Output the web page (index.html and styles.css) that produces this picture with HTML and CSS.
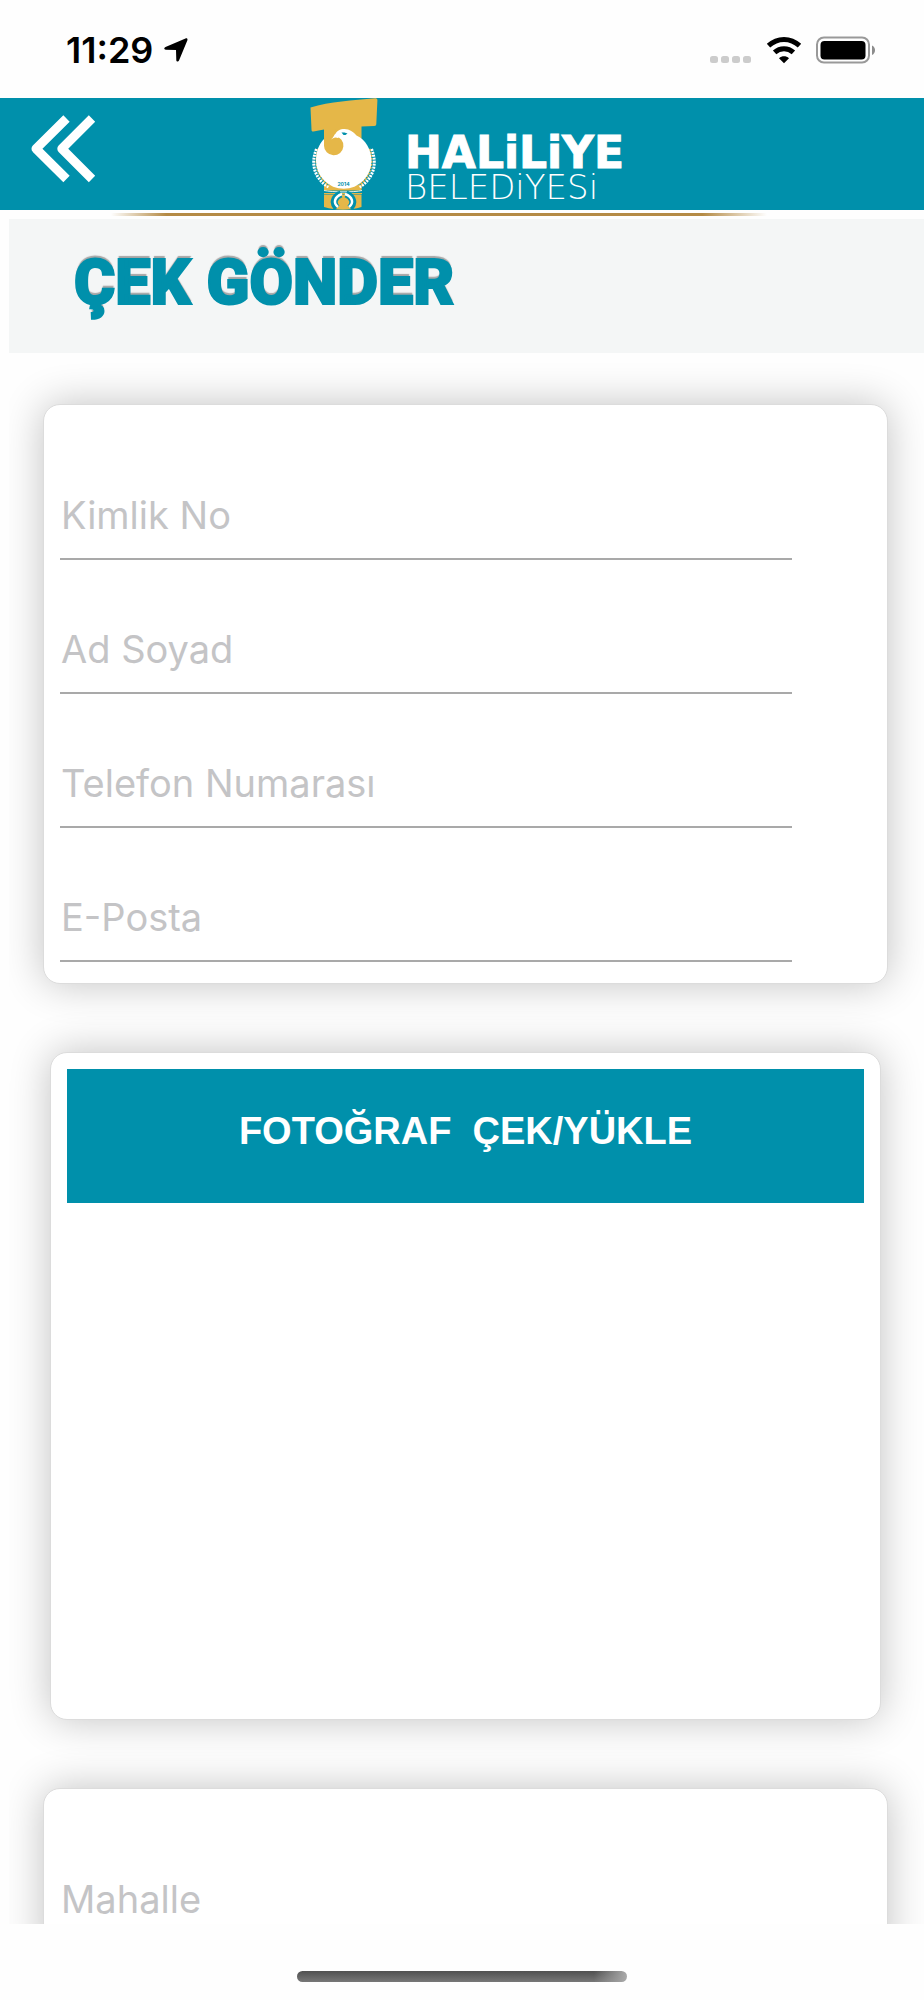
FILE: index.html
```html
<!DOCTYPE html>
<html lang="tr">
<head>
<meta charset="utf-8">
<meta name="viewport" content="width=device-width, initial-scale=1">
<title>Çek Gönder</title>
<link rel="stylesheet" href="styles.css">
</head>
<body>
<div class="status-bar">
  <div class="status-left">
    <span class="clock">11:29</span>
    <svg class="location" viewBox="0 0 24 24" width="24" height="24" aria-hidden="true"><path d="M1.500 9 21.500 .5c1.300-.5 2.300.4 1.900 1.700L15 22.500c-.6 1.500-2.600 1.300-2.700-.3L12 12 1.800 11.800C-.2 11.700-.2 9.700 1.500 9Z"/></svg>
  </div>
  <div class="status-right">
    <svg width="42" height="28" viewBox="0 0 42 28" aria-hidden="true"><g fill="#ccc"><rect y="20" width="8" height="7" rx="2.500"/><rect x="11" y="20" width="8" height="7" rx="2.500"/><rect x="22" y="20" width="8" height="7" rx="2.500"/><rect x="33" y="20" width="8" height="7" rx="2.500"/></g></svg>
    <svg width="36" height="28" viewBox="0 0 36 28" aria-hidden="true"><g fill="none" stroke="#000" stroke-width="5"><path d="M2.500 9.700C11.500 1.300 24.500 1.300 33.500 9.700"/><path d="M8.600 16.400C14 11.400 22 11.400 27.400 16.400"/></g><path d="M13 22.200c3-2.600 7-2.600 10 0L18 27.200Z"/></svg>
    <svg width="60" height="28" viewBox="0 0 60 28" aria-hidden="true"><rect x="1" y="1.500" width="52" height="25" rx="7" fill="none" stroke="#999" stroke-width="2"/><rect x="4.500" y="5" width="45" height="18.500" rx="4" fill="#000"/><path d="M56 9.500c4 1.500 4 8 0 9.500Z" fill="#8c8c8c"/></svg>
  </div>
</div>

<header class="app-header">
  <button class="back" type="button" aria-label="Geri">
    <svg width="66" height="68" viewBox="0 0 66 68" aria-hidden="true"><g fill="none" stroke="#fff" stroke-width="9" stroke-linejoin="round"><path d="M36.500 3.500 6 33.700 36.500 64"/><path d="M62 3.500 31.800 33.700 62 64"/></g></svg>
  </button>
  <div class="brand">
    <svg class="emblem" width="100" height="112" viewBox="0 0 100 112" aria-hidden="true">
      <path fill="#e5b748" d="M16.500 9.500C36 3.500 59 2.500 81 .3c1.500 0 2.500.7 2.400 2.200L82.300 26c-.1 1.300-.6 1.800-2 1.900L67.500 28.500V109c-12 3.500-25 3.500-37.500 0V31.500L19.500 33.500c-1.500.2-2-.5-2-2Z"/>
      <path fill="#0090ab" d="M26 72h46v15H26Z"/>
      <path fill="#e5b748" d="M30 87h37.500v4H30Z"/>
      <g fill="none" stroke-width="3" stroke-dasharray="2 1"><path stroke="#fff" d="M22.500 51c-7 17 0 31 12 38M77.500 51c7 17 0 31-12 38"/><path stroke="#e5b748" d="M25 51c-5 15 0 28 10 36M75 51c5 15 0 28-10 36"/></g>
      <path fill="#fff" d="M36 43.500c2.500-1.700 3.500-3.200 5-6.500 1.500-4.300 5-6 9.500-6 5 0 9 3 12 6.500 9 4 15 14 15 25.500A27.700 27.700 0 0 1 22 63c0-9.500 3-17 8-22Z"/>
      <path fill="#e5b748" d="M30 31h11.500c-1 4.500-2.500 8.500-5 11l4.500-4a9.700 9.700 0 1 1-11 9.700Z"/>
      <path fill="#fff" d="M35 43c3-2 4.500-4 6-7l6 1-3 3c-3-1.500-5 0-9 3Z"/>
      <path fill="#0090ab" d="M47.500 34.500h3l3 1-2 1.500h-2Z"/>
      <text x="49.500" y="87.500" text-anchor="middle" class="emblem-year">2014</text>
      <path fill="none" stroke="#0090ab" stroke-width="4" d="M29 94.500h39"/>
      <path fill="none" stroke="#e8f2e8" d="M30 92.500c8 1.700 30 2 38 0"/>
      <path fill="none" stroke="#e5b748" d="M30 95.500h38"/>
      <path fill="none" stroke="#0090ab" stroke-width="7" d="M47 96c-7 3-9 9-4 14M52 96c7 3 9 9 4 14"/>
      <path fill="none" stroke="#fff" stroke-width="2.500" d="M48 96c-8 3-9 9-4 13M51 96c8 3 9 9 4 13"/>
    </svg>
    <div class="wordmark"><span class="wordmark-name">HALiLiYE</span><span class="wordmark-type">BELEDiYESi</span></div>
  </div>
</header>
<div class="gold-line"></div>

<main class="content">
  <div class="title-panel"><h1>ÇEK GÖNDER</h1></div>
  <form class="cards">
    <section class="card">
      <input class="field" type="text" placeholder="Kimlik No" aria-label="Kimlik No">
      <input class="field" type="text" placeholder="Ad Soyad" aria-label="Ad Soyad">
      <input class="field" type="tel" placeholder="Telefon Numarası" aria-label="Telefon Numarası">
      <input class="field" type="email" placeholder="E-Posta" aria-label="E-Posta">
    </section>
    <section class="card photo-card">
      <button class="upload" type="button">FOTOĞRAF&nbsp; ÇEK/YÜKLE</button>
      <div class="preview"></div>
    </section>
    <section class="card">
      <input class="field" type="text" placeholder="Mahalle" aria-label="Mahalle">
    </section>
  </form>
</main>
<footer class="home-area"><div class="home-indicator"></div></footer>
</body>
</html>
```
FILE: styles.css
```css
* { box-sizing: border-box; }

body {
  margin: 0;
  height: 100vh;
  display: flex;
  flex-direction: column;
  background: #fefefe;
  font-family: Inter, "Liberation Sans", sans-serif;
}

.status-bar {
  flex: none;
  height: 98px;
  padding: 2px 48px 0 66px;
  display: flex;
  align-items: center;
  justify-content: space-between;
}
.status-left { display: flex; align-items: center; gap: 11px; }
.clock { font-size: 36px; font-weight: 600; line-height: 40px; }
.status-right { display: flex; align-items: center; gap: 14px; }

.app-header {
  flex: none;
  height: 112px;
  display: grid;
  grid-template-columns: 1fr auto 1fr;
  align-items: center;
  background: #0090ab;
}
.back {
  justify-self: start;
  margin: 0 0 10px 30px;
  padding: 0;
  border: 0;
  background: none;
  line-height: 0;
}
.brand { display: flex; height: 112px; }
.wordmark {
  width: 236px;
  padding: 39px 0 0 11px;
  display: flex;
  flex-direction: column;
  gap: 4px;
  color: #fff;
  white-space: nowrap;
}
.wordmark-name {
  font: 700 44px/32px "DejaVu Sans", sans-serif;
  -webkit-text-stroke: 1px #fff;
}
.wordmark-type { font: 200 34px/28px "DejaVu Sans", "DejaVu Sans Light", sans-serif; }
.emblem-year { font: 700 5px Inter, sans-serif; fill: #0090ab; }

.gold-line {
  flex: none;
  height: 3px;
  margin: 3px 0;
  background: linear-gradient(90deg, transparent 12%, #b48a45 18%, #b48a45 76%, transparent 83%);
}

.content {
  flex: 1;
  min-height: 0;
  margin-left: 9px;
  overflow: auto;
  scrollbar-width: none;
}
.title-panel {
  height: 134px;
  padding: 24px 65px;
  background: #f4f6f6;
}
h1 {
  margin: 0;
  color: #0090ab;
  font: 900 63px/80px Roboto, sans-serif;
  -webkit-text-stroke: 2px #0090ab;
  text-shadow: 0 -3px 1px #a5a5a5;
}

.cards {
  padding: 51px 36px 68px 34px;
  display: flex;
  flex-direction: column;
  gap: 68px;
}
.card {
  padding: 21px 95px 21px 16px;
  border: 1px solid #dcdcdc;
  border-radius: 17px;
  background: #fff;
  box-shadow: 0 0 40px rgba(0, 0, 0, .24);
}
.field {
  display: block;
  width: 100%;
  height: 134px;
  padding: 45px 1px 0;
  border: 0;
  border-bottom: 2px solid #a9a9a9;
  border-radius: 0;
  outline: 0;
  background: none;
  color: #222;
  font: 400 38px/48px Inter, sans-serif;
}
.field::placeholder { color: #c4c4c6; opacity: 1; }

.photo-card { margin: 0 7px; padding: 16px; }
.upload {
  display: block;
  width: 100%;
  height: 134px;
  padding: 0 0 10px;
  border: 0;
  background: #0090ab;
  color: #fff;
  font: 700 38px/44px "Liberation Sans", Arial, sans-serif;
}
.preview { height: 500px; }

.home-area {
  flex: none;
  height: 76px;
  padding-top: 47px;
}
.home-indicator {
  width: 330px;
  height: 11px;
  margin: 0 auto;
  border-radius: 6px;
  background: linear-gradient(90deg, transparent 90%, #aaa), linear-gradient(#505050, #777);
}
```
